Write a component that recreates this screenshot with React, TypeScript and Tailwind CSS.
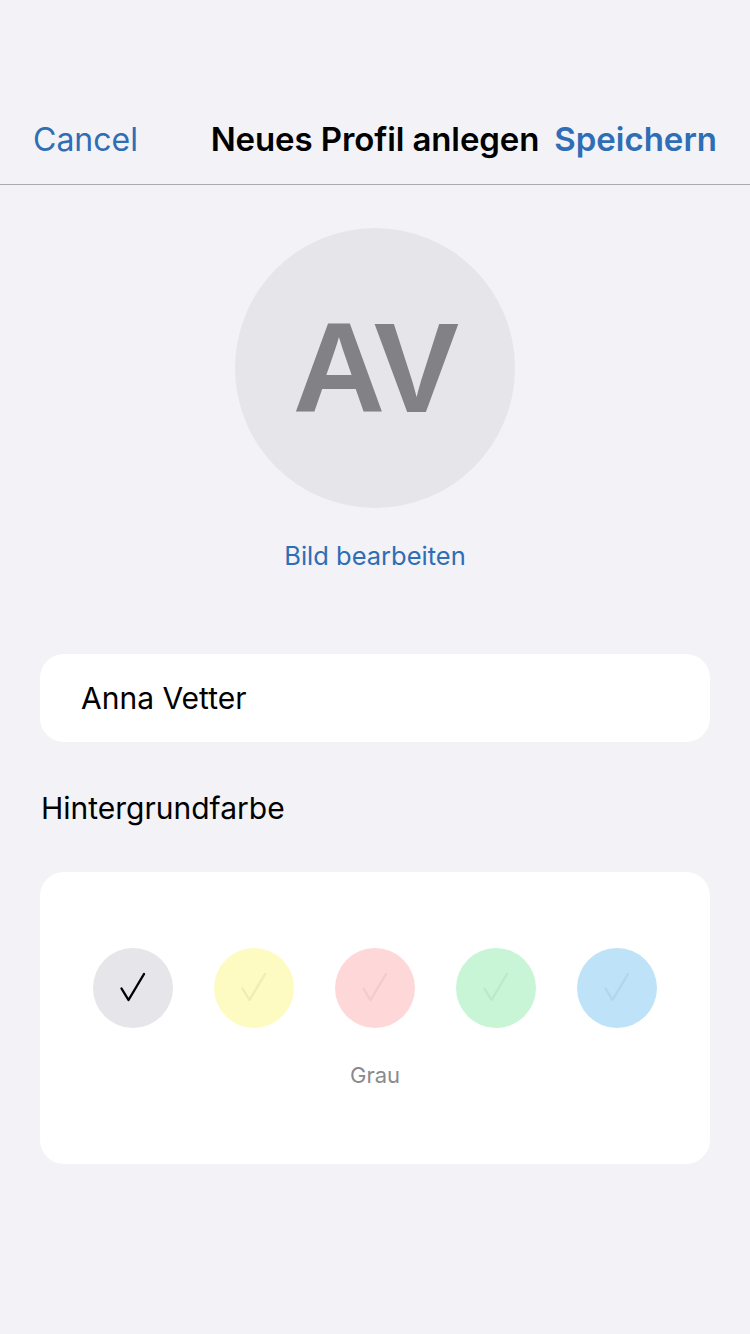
import { useState } from "react";

type Swatch = { name: string; bg: string; tick: string };

const swatches: Swatch[] = [
  { name: "Grau", bg: "bg-[#e5e5ea]", tick: "#000000" },
  { name: "Gelb", bg: "bg-[#fefbc2]", tick: "#efecb4" },
  { name: "Rot", bg: "bg-[#fed8d8]", tick: "#f1cccc" },
  { name: "Grün", bg: "bg-[#c8f5d6]", tick: "#bbe9c9" },
  { name: "Blau", bg: "bg-[#bee2f7]", tick: "#b2d6eb" },
];

function Check({ color }: { color: string }) {
  return (
    <svg width="32" height="32" viewBox="0 0 32 32" fill="none">
      <path
        d="M4.5 16.5 L11.5 28 L27 2"
        stroke={color}
        strokeWidth="2.4"
        strokeLinecap="round"
        strokeLinejoin="round"
      />
    </svg>
  );
}

export default function App() {
  const [selected, setSelected] = useState(0);

  return (
    <div
      className="min-h-[1334px] w-[750px] bg-[#f2f2f7] text-black"
      style={{ fontFamily: "Inter, 'Noto Sans', sans-serif" }}
    >
      <header className="border-b border-[#a9a9ae] pt-[96px]">
        <div className="grid h-[88px] grid-cols-[1fr_auto_1fr] items-center px-[33px]">
          <button type="button" className="justify-self-start text-[32px] text-[#2f6db4]">
            Cancel
          </button>
          <h1 className="text-[33px] font-semibold tracking-[-0.1px]">Neues Profil anlegen</h1>
          <button
            type="button"
            className="justify-self-end text-[33px] font-semibold text-[#2f6db4]"
          >
            Speichern
          </button>
        </div>
      </header>

      <div className="flex flex-col items-center pt-[43px]">
        <div className="flex h-[280px] w-[280px] items-center justify-center rounded-full bg-[#e5e5ea]">
          <span
            className="text-[128px] font-bold leading-none tracking-[-2px] text-[#818186]"
            style={{ fontFamily: "'Liberation Sans', Arial, sans-serif" }}
          >
            AV
          </span>
        </div>
        <button type="button" className="mt-[32px] text-[25.5px] leading-[32px] text-[#2f6db4]">
          Bild bearbeiten
        </button>
      </div>

      <div className="px-[40px]">
        <div className="mt-[82px] flex h-[88px] items-center rounded-[24px] bg-white pl-[41px] text-[30px]">
          Anna Vetter
        </div>

        <p className="mt-[46px] pl-px text-[30px] leading-[40px]">Hintergrundfarbe</p>

        <div className="mt-[44px] flex flex-col items-center rounded-[24px] bg-white pb-[74px] pt-[76px]">
          <div className="flex gap-[41px]">
            {swatches.map((s, i) => (
              <button
                type="button"
                key={s.name}
                onClick={() => setSelected(i)}
                className={`flex h-[80px] w-[80px] items-center justify-center rounded-full ${s.bg}`}
              >
                <Check color={i === selected ? "#000000" : s.tick} />
              </button>
            ))}
          </div>
          <p className="mt-[32px] text-[22px] leading-[30px] text-[#8a8a8e]">
            {swatches[selected].name}
          </p>
        </div>
      </div>
    </div>
  );
}
